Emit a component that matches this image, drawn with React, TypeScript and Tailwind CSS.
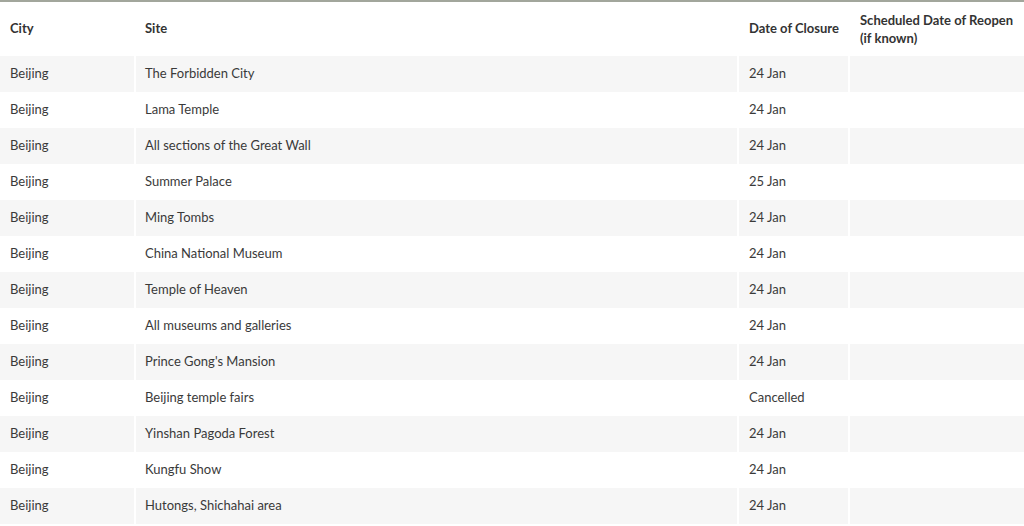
const rows: [string, string, string][] = [
  ["Beijing", "The Forbidden City", "24 Jan"],
  ["Beijing", "Lama Temple", "24 Jan"],
  ["Beijing", "All sections of the Great Wall", "24 Jan"],
  ["Beijing", "Summer Palace", "25 Jan"],
  ["Beijing", "Ming Tombs", "24 Jan"],
  ["Beijing", "China National Museum", "24 Jan"],
  ["Beijing", "Temple of Heaven", "24 Jan"],
  ["Beijing", "All museums and galleries", "24 Jan"],
  ["Beijing", "Prince Gong's Mansion", "24 Jan"],
  ["Beijing", "Beijing temple fairs", "Cancelled"],
  ["Beijing", "Yinshan Pagoda Forest", "24 Jan"],
  ["Beijing", "Kungfu Show", "24 Jan"],
  ["Beijing", "Hutongs, Shichahai area", "24 Jan"],
];

const cols = "grid grid-cols-[134px_601px_109px_1fr] gap-x-[2px]";

export default function App() {
  return (
    <div className="w-[1024px] h-[526px] overflow-hidden bg-white border-t-2 border-[#a2a69c] text-[#3a3a3a] text-[13px] font-['Lato','Liberation_Sans',sans-serif]">
      {/* header */}
      <div className={`${cols} h-[54px] font-bold text-[#333]`}>
        <div className="flex items-center px-[10px]">City</div>
        <div className="flex items-center px-[9px]">Site</div>
        <div className="flex items-center px-[10px] whitespace-nowrap">Date of Closure</div>
        <div className="flex items-center px-[10px] leading-[18px]">
          Scheduled Date of Reopen (if known)
        </div>
      </div>

      {rows.map(([city, site, date], i) => {
        const bg = i % 2 === 0 ? "bg-[#f6f6f6]" : "bg-white";
        return (
          <div key={site} className={`${cols} h-[36px]`}>
            <div className={`${bg} flex items-center px-[10px]`}>{city}</div>
            <div className={`${bg} flex items-center px-[9px]`}>{site}</div>
            <div className={`${bg} flex items-center px-[10px] whitespace-nowrap`}>{date}</div>
            <div className={`${bg}`}></div>
          </div>
        );
      })}
    </div>
  );
}
